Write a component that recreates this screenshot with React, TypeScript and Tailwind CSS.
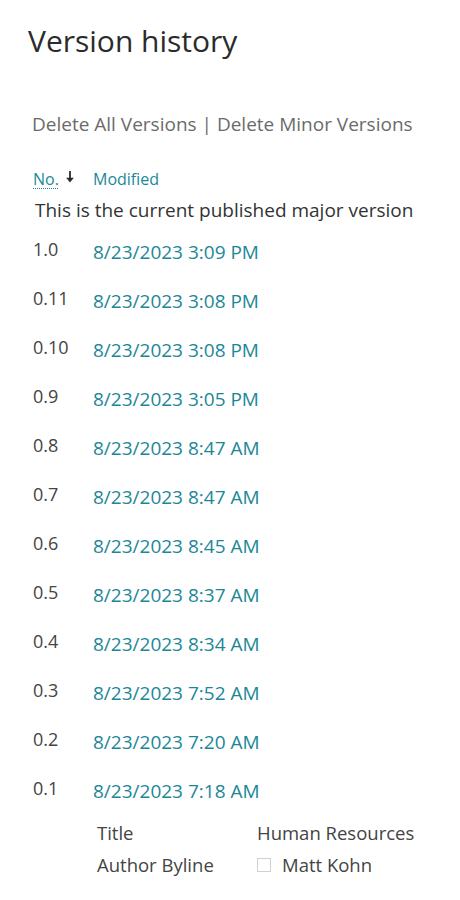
const versions = [
  { no: '1.0', date: '8/23/2023 3:09 PM' },
  { no: '0.11', date: '8/23/2023 3:08 PM' },
  { no: '0.10', date: '8/23/2023 3:08 PM' },
  { no: '0.9', date: '8/23/2023 3:05 PM' },
  { no: '0.8', date: '8/23/2023 8:47 AM' },
  { no: '0.7', date: '8/23/2023 8:47 AM' },
  { no: '0.6', date: '8/23/2023 8:45 AM' },
  { no: '0.5', date: '8/23/2023 8:37 AM' },
  { no: '0.4', date: '8/23/2023 8:34 AM' },
  { no: '0.3', date: '8/23/2023 7:52 AM' },
  { no: '0.2', date: '8/23/2023 7:20 AM' },
  { no: '0.1', date: '8/23/2023 7:18 AM' },
]

export default function App() {
  return (
    <div className="min-h-[900px] w-[460px] bg-white pl-[28px] pt-[21px] font-['Open_Sans',sans-serif]">
      <h1 className="text-[30px] leading-[40px] text-[#2b2b2b]">Version history</h1>

      <div className="mt-[50px] pl-[4px] text-[19px] leading-[26px] text-[#6b6b6b]">
        Delete All Versions | Delete Minor Versions
      </div>

      <div className="mt-[31px] flex items-center pl-[5px] text-[16px] leading-[22px] text-[#1c8797]">
        <div className="flex w-[60px] items-center">
          <span className="underline decoration-dotted decoration-1 underline-offset-[3px]">No.</span>
          <svg width="10" height="12" viewBox="0 0 10 12" className="ml-[6px] -mt-[4px]">
            <path d="M5 0v8" stroke="#2b2b2b" strokeWidth="1.8" />
            <path d="M1.2 6.8h7.6L5 11.5z" fill="#2b2b2b" />
          </svg>
        </div>
        <span>Modified</span>
      </div>

      <div className="mt-[7px] pl-[7px] text-[19px] leading-[26px] text-[#333333]">
        This is the current published major version
      </div>

      <div className="mt-[13px] flex flex-col gap-[20px] pl-[5px] text-[19px] leading-[26px]">
        {versions.map((v) => (
          <div key={v.no} className="flex items-start">
            <span className="w-[60px] text-[18px] text-[#444444]">{v.no}</span>
            <span className="mt-[3px] text-[#1c8797]">{v.date}</span>
          </div>
        ))}
      </div>

      <div className="mt-[13px] grid grid-cols-[160px_1fr] pl-[69px] text-[18.5px] leading-[32px] text-[#444444]">
        <span>Title</span>
        <span>Human Resources</span>
        <span>Author Byline</span>
        <span className="flex items-center gap-[11px]">
          <span className="h-[14px] w-[14px] border border-[#cfcfcf]"></span>
          Matt Kohn
        </span>
      </div>
    </div>
  )
}
